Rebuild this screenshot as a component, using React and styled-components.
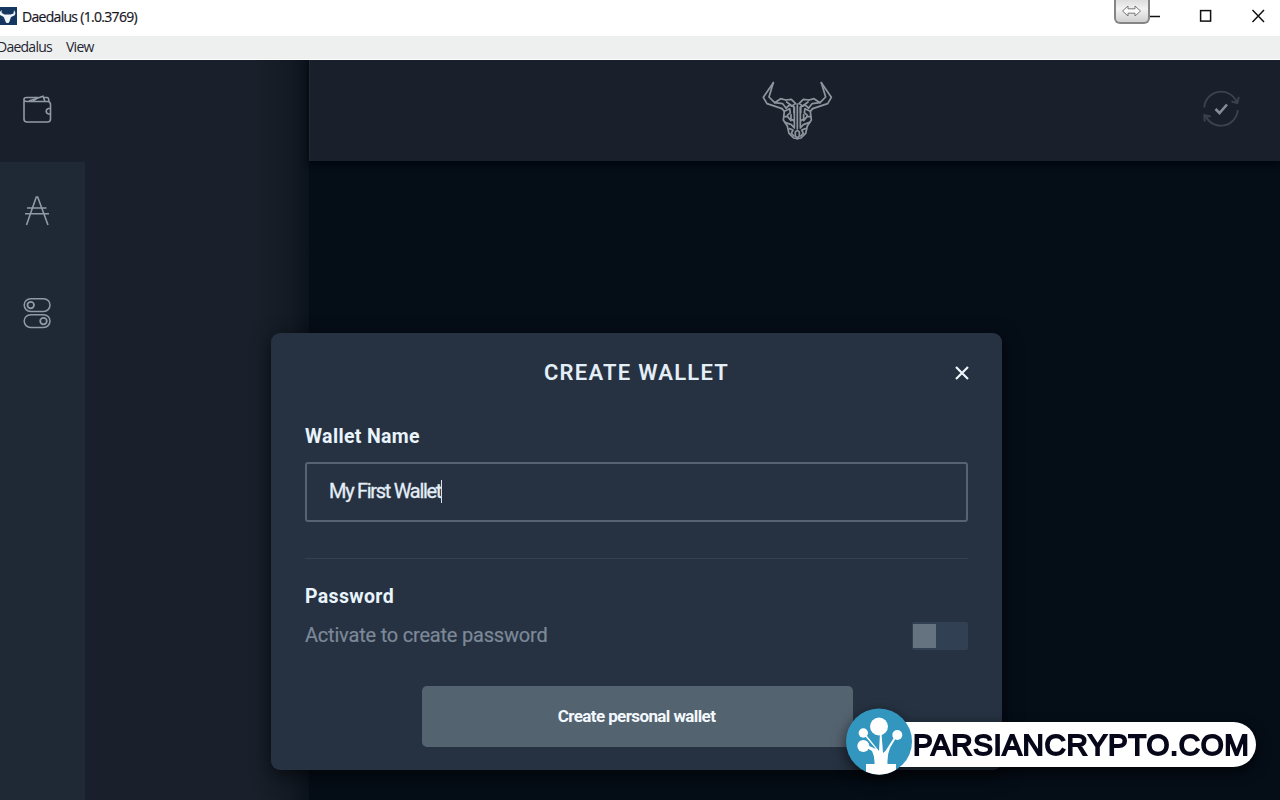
import { useState } from "react";
import styled, { createGlobalStyle } from "styled-components";

const horn = (
	<g>
		<path d='M70 38 L40 82 L51 101 L96 116' />
		<path d='M70 38 L57 81 L74 98 L92 86 L107 90' />
		<path d='M74 98 L98 101 L108 114' />
		<path d='M107 90 L124 88 L137 101 M110 96 L126 108 L133 103' />
		<path d='M96 116 L103 124 L100 150 L112 168 L117 190 L131 204 L142 206' />
		<path d='M108 114 L119 105 L132 111 V128 M103 124 L119 116 L121 128 L112 136' />
		<path d='M133 111 V172 M123 134 V146 L133 154 M102 140 H113 L123 152 M105 157 L124 164 L133 174' />
		<path d='M118 176 L129 180 L124 190 L132 198' />
	</g>
);

const BullLogo = () => (
	<svg
		width='95'
		height='80'
		viewBox='0 0 285 240'
		fill='none'
		stroke='#8f959d'
		strokeWidth='5.2'
		strokeLinejoin='round'
		strokeLinecap='round'
	>
		{horn}
		<g transform='translate(284 0) scale(-1 1)'>{horn}</g>
		<path d='M142 102 V176 M136 186 Q142 178 148 186 V198 Q142 206 136 198 Z' />
	</svg>
);

const AppMark = () => (
	<svg width='20' height='18' viewBox='0 0 20 18'>
		<path fill='#14365f' d='M0 0h17v18H0z' />
		<path
			fill='#eef4fa'
			d='M1.5 3 L1.8 6 L4.5 7.5 H10.5 L13.5 6.5 L14 3 L15.5 6 L14.5 8.5 L12 9.5 L10.8 10.5 L9.5 14.5 L8.5 16 H6.5 L5.5 14.5 L4 10.5 L3 9.5 L0 8 L0 5 Z'
		/>
	</svg>
);

const WalletIcon = () => (
	<svg width='30' height='30' viewBox='0 0 30 30' fill='none' stroke='currentColor' strokeWidth='1.6'>
		<path d='M2 4.5 C1.6 7 3 7.5 5 7.5 H25.5 Q28.5 7.5 28.5 10.5 V25 Q28.5 28 25.5 28 H5 Q2 28 2 25 V5.5 Q2 3.7 4.5 3.5 H16' />
		<path d='M7 7 L21 2.2 L22.8 7 M11 7 L16 3.5 M22 3.5 H25 Q27 3.5 26.8 7.5' />
		<path d='M28.5 14.5 H26.5 A2.8 2.8 0 0 0 26.5 20 H28.5' />
	</svg>
);

const AdaIcon = () => (
	<svg width='30' height='32' viewBox='0 0 30 32' fill='none' stroke='currentColor' strokeWidth='1.6'>
		<path d='M4.5 30 L14.3 2 H15.7 L26 30 M5 13 H24.5 M3 18.7 H27' />
	</svg>
);

const TogglesIcon = () => (
	<svg width='30' height='32' viewBox='0 0 30 32' fill='none' stroke='currentColor' strokeWidth='1.5'>
		<rect x='2.2' y='1.7' width='25.8' height='12.8' rx='6.4' />
		<rect x='2.2' y='17.7' width='25.8' height='12.8' rx='6.4' />
		<circle cx='8.7' cy='8.1' r='3.3' strokeWidth='1.8' />
		<circle cx='21.5' cy='24.1' r='3.3' strokeWidth='1.8' />
	</svg>
);

const SyncIcon = () => (
	<svg width='40' height='40' viewBox='0 0 40 40' fill='none' stroke='#3a424e' strokeWidth='1.9'>
		<path d='M3.2 17.5 A17 17 0 0 1 36 12.5 M36.8 20 A17 17 0 0 1 4.5 26' />
		<path d='M30.5 11.5 L36.3 13 L37.8 7 M3.7 31.5 L3.3 25.2 L9.7 26.5' />
		<path d='M14.5 19 L18.5 23 L26 14.5' stroke='#858c96' strokeWidth='2.6' />
	</svg>
);

const TreeLogo = () => (
	<svg width='68' height='68' viewBox='0 0 68 68'>
		<circle cx='33' cy='33.5' r='33' fill='#3296bf' />
		<circle cx='33' cy='18.5' r='9' fill='#fff' />
		<circle cx='17.3' cy='25' r='4.7' fill='#fff' />
		<circle cx='17.3' cy='38' r='6' fill='#fff' />
		<circle cx='51.3' cy='27' r='5' fill='#fff' />
		<path
			fill='#fff'
			d='M18 27 L19.5 26 L31 40.5 L33 43 L34 25 H35.5 L37 45 Q40 43 42 39 L49 28 L50.5 29 L44 40 Q41 47 41.5 56 H50 V61.8 A33 33 0 0 1 20 63.8 V56 H28.5 Q29 49 26 43 L20 39.5 L22 37.5 L30 41 Z'
		/>
	</svg>
);

const App = () => {
	const [name, setName] = useState("My First Wallet");
	const [protect, setProtect] = useState(false);

	return (
		<Window>
			<GlobalStyle />
			<TitleBar>
				<AppMark />
				<WindowTitle>Daedalus (1.0.3769)</WindowTitle>
				<WindowControls>
					<ResizeTab>
						<svg width='22' height='14' viewBox='0 0 22 14' fill='#fafafa' stroke='#777'>
							<path d='M1.5 7 L7 2 V4.8 H14 V2 L19.5 7 L14 12 V9.2 H7 V12 Z' />
						</svg>
					</ResizeTab>
					<svg width='130' height='36' viewBox='0 0 130 36' fill='none' stroke='#111' strokeWidth='1.5'>
						<path d='M0 16.5 H10' />
						<rect x='50.6' y='10.6' width='10' height='10.5' />
						<path d='M102.5 10 L114 22 M114 10 L102.5 22' />
					</svg>
				</WindowControls>
			</TitleBar>
			<MenuBar>
				<MenuItem $width={55}>Daedalus</MenuItem>
				<MenuItem $width={31}>View</MenuItem>
			</MenuBar>
			<Body>
				<Sidebar>
					<SideItem $active>
						<WalletIcon />
					</SideItem>
					<SideItem>
						<AdaIcon />
					</SideItem>
					<SideItem>
						<TogglesIcon />
					</SideItem>
				</Sidebar>
				<WalletList />
				<Main>
					<TopBar>
						<span />
						<BullLogo />
						<SyncIcon />
					</TopBar>
				</Main>
			</Body>

			<Overlay>
				<Dialog>
					<DialogHeader>
						<span />
						<DialogTitle>Create wallet</DialogTitle>
						<CloseButton aria-label='Close'>
							<svg width='14' height='14' viewBox='0 0 14 14' stroke='#eef5fb' strokeWidth='2.2'>
								<path d='M1 1 L13 13 M13 1 L1 13' />
							</svg>
						</CloseButton>
					</DialogHeader>
					<Label>Wallet Name</Label>
					<InputBox>
						<NameInput
							size='1'
							value={name}
							onChange={(e) => setName(e.target.value)}
						/>
						<Caret />
					</InputBox>
					<Divider />
					<Label>Password</Label>
					<PasswordRow>
						<Hint>Activate to create password</Hint>
						<Switch $on={protect} onClick={() => setProtect(!protect)}>
							<Thumb />
						</Switch>
					</PasswordRow>
					<SubmitButton>Create personal wallet</SubmitButton>
				</Dialog>
			</Overlay>

			<Watermark>
				<TreeLogo />
				<WatermarkText>PARSIANCRYPTO.COM</WatermarkText>
			</Watermark>
		</Window>
	);
};

export default App;

const GlobalStyle = createGlobalStyle`
	* {
		box-sizing: border-box;
	}
	body {
		margin: 0;
		overflow: hidden;
		font-family: Roboto, sans-serif;
	}
	button, input {
		font: inherit;
		border: none;
		background: none;
		padding: 0;
		margin: 0;
	}
	svg {
		display: block;
		flex-shrink: 0;
	}
`;

const Window = styled.div`
	position: relative;
	width: 1280px;
	height: 800px;
	display: flex;
	flex-direction: column;
	overflow: hidden;
	background-color: #050d17;
`;
const TitleBar = styled.header`
	height: 36px;
	display: flex;
	align-items: center;
	background-color: #fff;
	padding-bottom: 4px;
`;
const WindowTitle = styled.div`
	margin-left: 2px;
	font-family: "Open Sans", sans-serif;
	font-size: 14px;
	letter-spacing: -0.7px;
	color: #17171f;
	-webkit-text-stroke: 0.2px #17171f;
`;
const WindowControls = styled.div`
	margin-left: auto;
	height: 36px;
	margin-bottom: -4px;
	display: flex;
	align-items: flex-start;
`;
const ResizeTab = styled.div`
	width: 36px;
	height: 24px;
	display: grid;
	place-items: center;
	border: 2px solid #858585;
	border-top: none;
	border-radius: 0 0 6px 6px;
	background: linear-gradient(#ddd, #f2f2f2 40%, #d0d0d0);
`;
const MenuBar = styled.nav`
	height: 24px;
	display: flex;
	align-items: center;
	gap: 14px;
	margin-left: -3px;
	padding-bottom: 2px;
	background-color: #eef0f0;
	border-bottom: 1px solid #fff;
`;
const MenuItem = styled.div`
	width: ${(props) => props.$width}px;
	font-family: "Open Sans", sans-serif;
	font-size: 14px;
	letter-spacing: -0.75px;
	white-space: nowrap;
	color: #252530;
`;
const Body = styled.div`
	flex: 1;
	display: flex;
	overflow: hidden;
`;
const Sidebar = styled.aside`
	width: 85px;
	background-color: #1e2935;
`;
const SideItem = styled.div`
	height: 102px;
	display: flex;
	align-items: center;
	padding: 0 0 4px 22px;
	color: #929aa5;
	background-color: ${(props) => (props.$active ? "#19202b" : "transparent")};
`;
const WalletList = styled.section`
	width: 224px;
	background: linear-gradient(90deg, #19202b 75%, #131a23 92%, #0b121b);
`;
const Main = styled.main`
	flex: 1;
	background-color: #050d17;
`;
const TopBar = styled.div`
	height: 101px;
	display: grid;
	grid-template-columns: 1fr 95px 1fr;
	align-items: center;
	background-color: #191f2b;
	padding: 0 39px 2px 43px;
	box-shadow: 0 3px 6px #01060d;
	border-left: 1px solid #202a36;

	> :last-child {
		justify-self: end;
	}
`;

const Overlay = styled.div`
	position: absolute;
	inset: 0;
	padding: 333px 278px 30px 271px;
`;
const Dialog = styled.div`
	height: 437px;
	display: flex;
	flex-direction: column;
	padding: 21px 34px 23px;
	border-radius: 9px;
	background-color: #263242;
	box-shadow: 0 5px 20px rgba(0, 0, 0, 0.6);
`;
const DialogHeader = styled.div`
	height: 36px;
	display: grid;
	grid-template-columns: 1fr auto 1fr;
	align-items: center;
`;
const DialogTitle = styled.h1`
	margin: 0;
	font-size: 22px;
	font-weight: 600;
	letter-spacing: 1.25px;
	text-transform: uppercase;
	color: #e4eef7;
`;
const CloseButton = styled.button`
	justify-self: end;
	padding-top: 2px;
	margin-right: -1px;
	cursor: pointer;
`;
const Label = styled.label`
	margin-top: 35px;
	line-height: 24px;
	font-size: 19.5px;
	font-weight: 700;
	letter-spacing: 0.35px;
	color: #e9f4fc;
`;
const InputBox = styled.div`
	height: 60px;
	margin-top: 13px;
	display: flex;
	align-items: center;
	padding: 0 0 2px 22px;
	border: 2px solid #566372;
	border-radius: 3px;
`;
const NameInput = styled.input`
	field-sizing: content;
	font-size: 20px;
	letter-spacing: -1.3px;
	-webkit-text-stroke: 0.3px #e4eef7;
	color: #e4eef7;
	outline: none;
`;
const Caret = styled.span`
	width: 1px;
	height: 23px;
	background-color: #d6e2ed;
`;
const Divider = styled.hr`
	width: 100%;
	height: 1px;
	margin: 36px 0 -9px;
	border: none;
	background-color: #344152;
`;
const PasswordRow = styled.div`
	display: flex;
	justify-content: space-between;
	align-items: center;
	margin-top: 13px;
`;
const Hint = styled.div`
	padding-bottom: 3px;
	font-size: 20px;
	letter-spacing: -0.2px;
	-webkit-text-stroke: 0.2px #7d8998;
	color: #7d8998;
`;
const Switch = styled.button`
	width: 56px;
	height: 28px;
	display: flex;
	justify-content: ${(props) => (props.$on ? "flex-end" : "flex-start")};
	align-items: center;
	padding: 0 1px;
	border-radius: 2px;
	background-color: #324053;
	cursor: pointer;
`;
const Thumb = styled.span`
	width: 23px;
	height: 24px;
	background-color: #657381;
`;
const SubmitButton = styled.button`
	width: 431px;
	height: 61px;
	margin: auto auto 0 117px;
	padding: 0 2px 2px 0;
	border-radius: 5px;
	background-color: #546370;
	font-size: 17px;
	font-weight: 700;
	letter-spacing: -0.6px;
	color: #f2f8fc;
	cursor: pointer;
`;

const Watermark = styled.div`
	position: absolute;
	left: 846px;
	top: 708px;
	width: 410px;
	height: 68px;
	display: flex;
	align-items: center;
	filter: drop-shadow(0 5px 7px rgba(0, 0, 0, 0.65));

	> svg {
		z-index: 1;
	}
`;
const WatermarkText = styled.div`
	flex: 1;
	height: 45px;
	margin: 4px 0 0 -20px;
	padding-left: 19px;
	line-height: 46px;
	border-radius: 0 23px 23px 0;
	background-color: #fff;
	font-family: "Liberation Sans", sans-serif;
	font-size: 29.5px;
	letter-spacing: 0.6px;
	-webkit-text-stroke: 1.8px #07071a;
	color: #07071a;
`;
